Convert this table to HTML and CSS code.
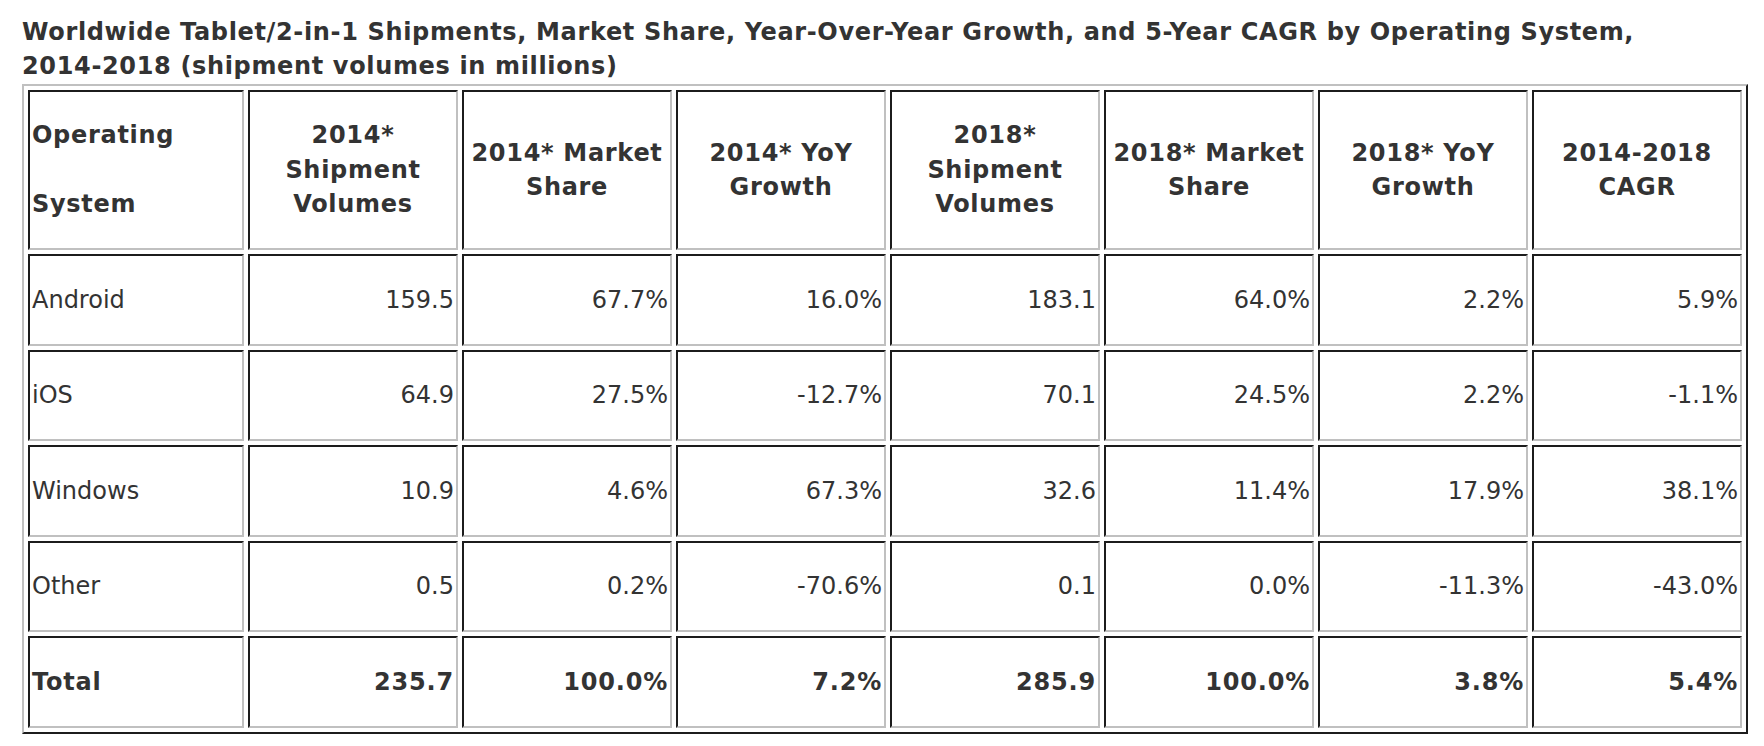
FILE: index.html
```html
<!DOCTYPE html>
<html lang="en">
<head>
<meta charset="utf-8">
<title>Worldwide Tablet/2-in-1 Shipments by Operating System</title>
<link rel="stylesheet" href="styles.css">
</head>
<body>
<div class="page">
  <h1 class="title">Worldwide Tablet/2-in-1 Shipments, Market Share, Year-Over-Year Growth, and 5-Year CAGR by Operating System, <span class="nowrap">2014-2018</span> (shipment volumes in millions)</h1>
  <table class="data">
    <thead>
      <tr class="head-row">
        <th class="col-os">Operating<br><br>System</th>
        <th>2014* Shipment Volumes</th>
        <th>2014* Market Share</th>
        <th>2014* YoY Growth</th>
        <th>2018* Shipment Volumes</th>
        <th>2018* Market Share</th>
        <th>2018* YoY Growth</th>
        <th><span class="nowrap">2014-2018</span> CAGR</th>
      </tr>
    </thead>
    <tbody>
      <tr>
        <td class="name">Android</td>
        <td>159.5</td><td>67.7%</td><td>16.0%</td><td>183.1</td><td>64.0%</td><td>2.2%</td><td>5.9%</td>
      </tr>
      <tr>
        <td class="name">iOS</td>
        <td>64.9</td><td>27.5%</td><td>-12.7%</td><td>70.1</td><td>24.5%</td><td>2.2%</td><td>-1.1%</td>
      </tr>
      <tr>
        <td class="name">Windows</td>
        <td>10.9</td><td>4.6%</td><td>67.3%</td><td>32.6</td><td>11.4%</td><td>17.9%</td><td>38.1%</td>
      </tr>
      <tr>
        <td class="name">Other</td>
        <td>0.5</td><td>0.2%</td><td>-70.6%</td><td>0.1</td><td>0.0%</td><td>-11.3%</td><td>-43.0%</td>
      </tr>
      <tr class="total">
        <td class="name">Total</td>
        <td>235.7</td><td>100.0%</td><td>7.2%</td><td>285.9</td><td>100.0%</td><td>3.8%</td><td>5.4%</td>
      </tr>
    </tbody>
  </table>
</div>
</body>
</html>
```
FILE: styles.css
```css
html, body {
  margin: 0;
  padding: 0;
  background: #ffffff;
}

.page {
  padding: 15px 16px 0 22px;
  font-family: "DejaVu Sans", Verdana, sans-serif;
  color: #333333;
}

.nowrap {
  white-space: nowrap;
}

.title {
  margin: 0;
  font-size: 24px;
  font-weight: bold;
  line-height: 34px;
  letter-spacing: 0.65px;
  color: #333333;
}

.data {
  width: 100%;
  margin-top: 1px;
  table-layout: fixed;
  border-collapse: separate;
  border-spacing: 4px;
  border-style: solid;
  border-width: 2px;
  border-color: #c0c0c0 #1c1c1c #1c1c1c #c0c0c0;
  font-size: 24px;
}

.data th,
.data td {
  box-sizing: border-box;
  border-style: solid;
  border-width: 2px;
  border-color: #1c1c1c #c0c0c0 #c0c0c0 #1c1c1c;
  padding: 0 2px;
  vertical-align: middle;
  line-height: 34.5px;
}

.data th {
  height: 160px;
  font-weight: bold;
  letter-spacing: 0.7px;
  text-align: center;
}

.data th.col-os {
  width: 216px;
  text-align: left;
}

.data td {
  height: 91.6px;
  font-weight: normal;
  text-align: right;
}

.data td.name {
  text-align: left;
}

.data .total td {
  font-weight: bold;
  letter-spacing: 0.8px;
}
```
